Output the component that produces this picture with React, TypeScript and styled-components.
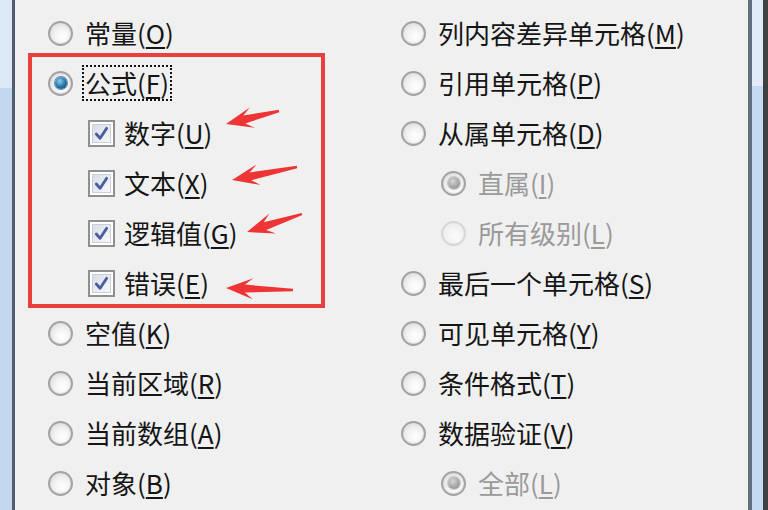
import React from 'react';
import styled, { createGlobalStyle, css } from 'styled-components';

const GlobalStyle = createGlobalStyle`
  html, body {
    margin: 0;
    padding: 0;
    background: #f0f0f0;
  }
  body {
    font-family: "Noto Sans CJK SC", "Noto Sans", sans-serif;
  }
`;

type Item = {
  kind: 'radio' | 'check';
  label: string;
  key: string;
  level?: number;
  checked?: boolean;
  disabled?: boolean;
  faint?: boolean;
  focused?: boolean;
};

const leftTop: Item[] = [{ kind: 'radio', label: '常量', key: 'O' }];

const leftGroup: Item[] = [
  { kind: 'radio', label: '公式', key: 'F', checked: true, focused: true },
  { kind: 'check', label: '数字', key: 'U', level: 1, checked: true },
  { kind: 'check', label: '文本', key: 'X', level: 1, checked: true },
  { kind: 'check', label: '逻辑值', key: 'G', level: 1, checked: true },
  { kind: 'check', label: '错误', key: 'E', level: 1, checked: true },
];

const leftBottom: Item[] = [
  { kind: 'radio', label: '空值', key: 'K' },
  { kind: 'radio', label: '当前区域', key: 'R' },
  { kind: 'radio', label: '当前数组', key: 'A' },
  { kind: 'radio', label: '对象', key: 'B' },
];

const rightItems: Item[] = [
  { kind: 'radio', label: '列内容差异单元格', key: 'M' },
  { kind: 'radio', label: '引用单元格', key: 'P' },
  { kind: 'radio', label: '从属单元格', key: 'D' },
  { kind: 'radio', label: '直属', key: 'I', level: 1, checked: true, disabled: true },
  { kind: 'radio', label: '所有级别', key: 'L', level: 1, disabled: true, faint: true },
  { kind: 'radio', label: '最后一个单元格', key: 'S' },
  { kind: 'radio', label: '可见单元格', key: 'Y' },
  { kind: 'radio', label: '条件格式', key: 'T' },
  { kind: 'radio', label: '数据验证', key: 'V' },
  { kind: 'radio', label: '全部', key: 'L', level: 1, checked: true, disabled: true },
];

// annotation arrows, tail -> tip, in page pixels
const arrows = [
  [279, 111, 226, 124],
  [297, 167, 232, 180],
  [302, 214, 247, 232],
  [293, 290, 226, 288],
];

const arrowPoints = (tx: number, ty: number, px: number, py: number) => {
  const dx = px - tx;
  const dy = py - ty;
  const len = Math.hypot(dx, dy);
  const ux = dx / len;
  const uy = dy / len;
  const nx = -uy;
  const ny = ux;
  const head = 27;
  const wing = 10.5;
  const shaft = 4;
  const at = (along: number, side: number) =>
    `${(px - ux * along + nx * side).toFixed(1)},${(py - uy * along + ny * side).toFixed(1)}`;
  const tail = (side: number) => `${(tx + nx * side).toFixed(1)},${(ty + ny * side).toFixed(1)}`;
  return [
    at(0, 0),
    at(head, wing),
    at(head * 0.7, shaft),
    tail(1.2),
    tail(-1.2),
    at(head * 0.7, -shaft),
    at(head, -wing),
  ].join(' ');
};

export default function App() {
  const renderItem = (item: Item, i: number) => (
    <Row key={item.label + i} $level={item.level ?? 0} $check={item.kind === 'check'}>
      {item.kind === 'radio' ? (
        <Radio $checked={!!item.checked} $disabled={!!item.disabled} $faint={!!item.faint} />
      ) : (
        <CheckBox>
          <svg width="18" height="18" viewBox="0 0 18 18">
            <path d="M3.5 9.5 L7.5 14 L14.5 3.5" fill="none" stroke="#4a5e9e" strokeWidth="3" strokeLinecap="round" strokeLinejoin="round" />
          </svg>
        </CheckBox>
      )}
      <Label $disabled={!!item.disabled} $focused={!!item.focused}>
        {item.label}(<Key>{item.key}</Key>)
      </Label>
    </Row>
  );

  return (
    <>
      <GlobalStyle />
      <Frame>
        <BorderLeft />
        <Dialog>
          <Column>
            {leftTop.map(renderItem)}
            <Highlight>{leftGroup.map(renderItem)}</Highlight>
            {leftBottom.map(renderItem)}
          </Column>
          <Column>{rightItems.map(renderItem)}</Column>
        </Dialog>
        <BorderRight />
        <Annotations width="768" height="510" viewBox="0 0 768 510">
          {arrows.map(([tx, ty, px, py], i) => (
            <polygon key={i} points={arrowPoints(tx, ty, px, py)} fill="#ee3434" />
          ))}
        </Annotations>
      </Frame>
    </>
  );
}

const Frame = styled.div`
  position: relative;
  width: 768px;
  height: 510px;
  display: flex;
  overflow: hidden;
`;

const BorderLeft = styled.div`
  width: 12px;
  background: linear-gradient(#dde9f6 0 88px, #c3d8ef 88px);
  border-right: 3px solid #4f5d6c;
`;

const BorderRight = styled.div`
  width: 11px;
  background: linear-gradient(#e1ecf8 0 86px, #c4daf2 86px);
  border-left: 4px solid #5f6f80;
  border-right: 5px solid #404040;
`;

const Dialog = styled.div`
  flex: 1;
  display: grid;
  grid-template-columns: 353px 1fr;
  padding: 8px 0 0 33px;
  background: #f0f0f0;
`;

const Column = styled.div`
  display: flex;
  flex-direction: column;
`;

const Highlight = styled.div`
  position: relative;
  display: flex;
  flex-direction: column;

  &::after {
    content: '';
    position: absolute;
    left: -20px;
    top: -5px;
    right: 76px;
    bottom: 0;
    border: 4px solid #e8403e;
    pointer-events: none;
  }
`;

const Row = styled.div<{ $level: number; $check: boolean }>`
  height: 50px;
  display: flex;
  align-items: center;
  gap: ${(p) => (p.$check ? 9 : 12)}px;
  padding-left: ${(p) => p.$level * 40}px;
`;

const Radio = styled.span<{ $checked: boolean; $disabled: boolean; $faint: boolean }>`
  position: relative;
  width: 25px;
  height: 25px;
  box-sizing: border-box;
  border-radius: 50%;
  border: 2px solid ${(p) => (p.$faint ? '#d6d6d6' : '#a3a3a3')};
  background: ${(p) =>
    p.$faint
      ? 'radial-gradient(circle at 60% 65%, #fbfbfb, #e9e9e9)'
      : 'radial-gradient(circle at 60% 65%, #ffffff 0, #f4f4f4 40%, #d4d4d4 100%)'};
  box-shadow: inset 0 0 0 1px ${(p) => (p.$faint ? '#eeeeee' : '#e2e2e2')};
  flex-shrink: 0;

  ${(p) =>
    p.$checked &&
    css`
      &::after {
        content: '';
        position: absolute;
        left: 50%;
        top: 50%;
        width: 12px;
        height: 12px;
        margin: -6px 0 0 -6px;
        border-radius: 50%;
        background: ${p.$disabled
          ? 'radial-gradient(circle at 40% 35%, #d6d6d6 0, #a6a6a6 55%, #8a8a8a 100%)'
          : 'radial-gradient(circle at 40% 35%, #8fd0f2 0, #2a78a8 50%, #0f3e5e 100%)'};
        box-shadow: 0 0 0 1px ${p.$disabled ? '#c4c4c4' : '#5b8fb0'};
      }
    `}
`;

const CheckBox = styled.span`
  width: 27px;
  height: 27px;
  box-sizing: border-box;
  border: 2px solid #8f8f8f;
  padding: 2px;
  display: flex;
  flex-shrink: 0;
  background: #ffffff;

  & > svg {
    flex: 1;
    width: 100%;
    height: 100%;
    background: linear-gradient(135deg, #d7dde8, #f7f8fb);
    border: 1px solid #c9ced8;
    box-sizing: border-box;
  }
`;

const Label = styled.span<{ $disabled: boolean; $focused: boolean }>`
  font-size: 26px;
  line-height: 32px;
  color: ${(p) => (p.$disabled ? '#9a9a9a' : '#151515')};
  white-space: nowrap;
  border: 2px dotted ${(p) => (p.$focused ? '#111' : 'transparent')};
  padding: 0 1px;
  margin-left: -3px;
`;

const Key = styled.span`
  text-decoration: underline;
  text-decoration-thickness: 2px;
  text-underline-offset: 3px;
`;

const Annotations = styled.svg`
  position: absolute;
  left: 0;
  top: 0;
  pointer-events: none;
`;
